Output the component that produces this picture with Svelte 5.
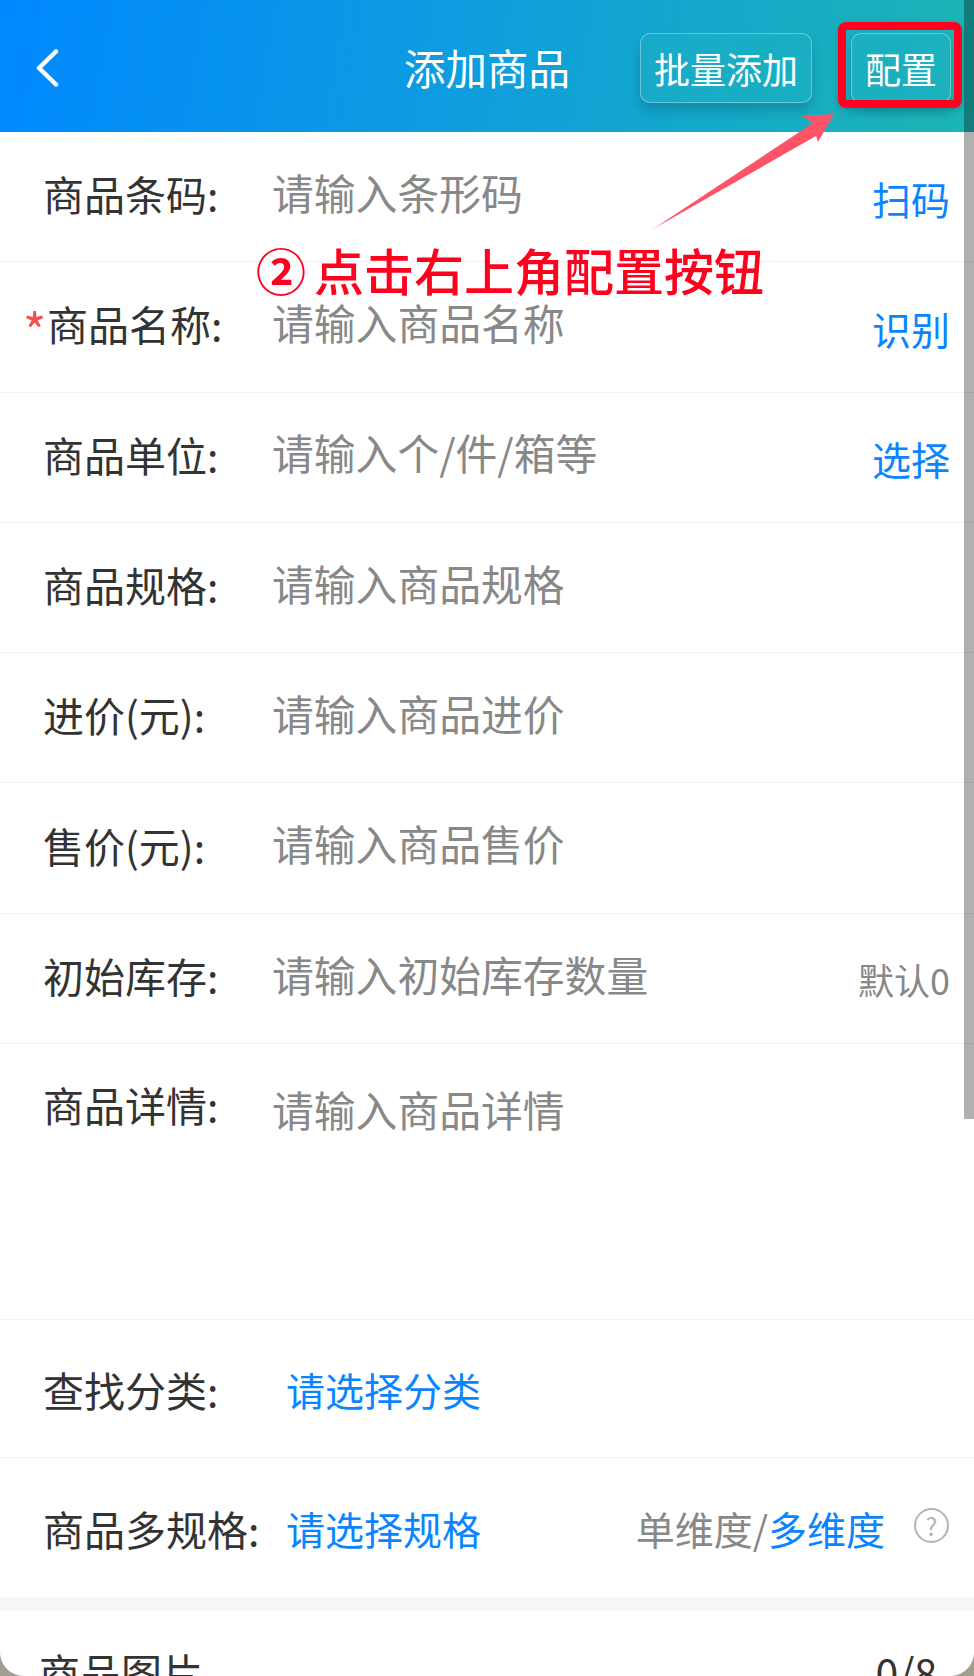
<script>
  const rows = [
    { label: "商品条码:", hint: "请输入条形码", action: "扫码" },
    { label: "商品名称:", hint: "请输入商品名称", action: "识别", required: true },
    { label: "商品单位:", hint: "请输入个/件/箱等", action: "选择" },
    { label: "商品规格:", hint: "请输入商品规格" },
    { label: "进价(元):", hint: "请输入商品进价" },
    { label: "售价(元):", hint: "请输入商品售价" },
    { label: "初始库存:", hint: "请输入初始库存数量", note: "默认0" }
  ];
</script>

<div class="page">
  <header class="topbar">
    <div class="back">
      <svg width="24" height="38" viewBox="0 0 24 38" fill="none">
        <path d="M21 2.5 L4 19 L21 35.5" stroke="#fff" stroke-width="4.5" stroke-linecap="round" stroke-linejoin="round" />
      </svg>
    </div>
    <h1>添加商品</h1>
    <div class="actions">
      <button>批量添加</button>
      <button class="config">配置</button>
    </div>
  </header>

  <main>
    {#each rows as row}
      <div class="row" class:required={row.required}>
        <span class="label">{#if row.required}<i>*</i>{/if}{row.label}</span>
        <span class="hint">{row.hint}</span>
        {#if row.action}<span class="action">{row.action}</span>{/if}
        {#if row.note}<span class="note">{row.note}</span>{/if}
      </div>
    {/each}

    <div class="row detail">
      <span class="label">商品详情:</span>
      <span class="hint">请输入商品详情</span>
    </div>

    <div class="row pick">
      <span class="label">查找分类:</span>
      <span class="link">请选择分类</span>
    </div>

    <div class="row pick spec">
      <span class="label">商品多规格:</span>
      <span class="link">请选择规格</span>
      <span class="dims">单维度/<b>多维度</b></span>
      <span class="help">?</span>
    </div>

    <div class="band"></div>

    <div class="images">
      <span>商品图片</span>
      <span class="count">0/8</span>
    </div>
  </main>

  <!-- annotation drawn over the screenshot -->
  <div class="redbox"></div>
  <svg class="arrow" width="190" height="125" viewBox="0 0 190 125">
    <polygon points="3,115 163,9 152,2 184,0 168,28 166,22" fill="#ff5468" />
  </svg>
  <div class="callout"><span class="num">②</span>点击右上角配置按钮</div>

  <div class="scrollbar"></div>
  <div class="corner left"></div>
  <div class="corner right"></div>
</div>

<style>
  :global(body) {
    background: #fff;
  }
  .page {
    position: relative;
    width: 974px;
    height: 1676px;
    overflow: hidden;
    background: #fff;
    font-family: "Noto Sans CJK SC", "Noto Sans", sans-serif;
  }
  .topbar {
    display: grid;
    grid-template-columns: 1fr auto 1fr;
    align-items: center;
    height: 132px;
    padding: 4px 23px 0 23px;
    box-sizing: border-box;
    background: linear-gradient(100deg, #0088ff 0%, #0d9ce0 45%, #1cb6b4 100%);
    color: #fff;
  }
  .back {
    display: flex;
    padding-left: 12px;
  }
  h1 {
    margin: 0;
    font-size: 41.5px;
    font-weight: 400;
    line-height: 1;
  }
  .actions {
    display: flex;
    justify-content: flex-end;
    gap: 39px;
  }
  button {
    height: 70px;
    padding: 0 13px;
    border: 1px solid rgba(255, 255, 255, 0.35);
    border-radius: 10px;
    background: rgba(30, 175, 195, 0.55);
    box-shadow: 0 8px 12px rgba(0, 40, 60, 0.22);
    color: #fff;
    font-family: inherit;
    font-size: 36px;
    line-height: 1;
  }
  .config {
    width: 100px;
    padding: 0;
  }
  .row {
    position: relative;
    display: flex;
    align-items: center;
    height: 130.3px;
    padding-left: 43px;
    padding-right: 24px;
    box-sizing: border-box;
    border-bottom: 1px solid #f1f1f1;
  }
  .label {
    width: 229px;
    flex: none;
    box-sizing: border-box;
    padding-bottom: 6px;
    color: #333;
    font-size: 41px;
    line-height: 1;
  }
  .label i {
    display: inline-block;
    width: 24px;
    margin-left: -26px;
    vertical-align: -10px;
    color: #f0524f;
    font-size: 50px;
    font-style: normal;
    line-height: 0;
  }
  .required .label {
    padding-left: 6px;
  }
  .hint {
    color: #888;
    font-size: 41.8px;
    line-height: 1;
    padding-bottom: 8px;
  }
  .action {
    margin-left: auto;
    margin-top: 3px;
    color: #0a84ff;
    font-size: 39px;
    line-height: 1;
  }
  .note {
    margin-left: auto;
    margin-top: 2px;
    color: #888;
    font-size: 36px;
    line-height: 1;
  }
  .detail {
    align-items: flex-start;
    height: 276px;
    padding-top: 40px;
  }
  .detail .hint {
    margin-top: 5px;
  }
  .pick {
    height: 138px;
    padding-top: 8px;
  }
  .pick .label {
    width: 243px;
  }
  .spec {
    height: 139px;
    padding-top: 8px;
    border-bottom: 0;
  }
  .link {
    padding-bottom: 6px;
    color: #0a84ff;
    font-size: 39px;
    line-height: 1;
  }
  .dims {
    margin-left: auto;
    padding-bottom: 6px;
    color: #888;
    font-size: 39px;
    line-height: 1;
  }
  .dims b {
    color: #0a84ff;
    font-weight: 400;
  }
  .help {
    display: flex;
    align-items: center;
    justify-content: center;
    width: 35px;
    height: 35px;
    margin-left: 29px;
    margin-right: 1px;
    margin-top: -12px;
    box-sizing: border-box;
    border: 2.5px solid #b4b4b4;
    border-radius: 50%;
    color: #b4b4b4;
    font-size: 25px;
    line-height: 1;
  }
  .band {
    height: 14px;
    background: #f7f7f7;
  }
  .images {
    display: flex;
    justify-content: space-between;
    padding: 40px 37px 0 39px;
    color: #333;
    font-size: 41px;
    line-height: 1;
  }
  .redbox {
    position: absolute;
    left: 838px;
    top: 22px;
    width: 124px;
    height: 86px;
    box-sizing: border-box;
    border: 8px solid #ff001f;
    border-radius: 8px;
    box-shadow: 0 3px 8px rgba(0, 40, 60, 0.2);
  }
  .arrow {
    position: absolute;
    left: 650px;
    top: 114px;
  }
  .callout {
    position: absolute;
    left: 256px;
    top: 237px;
    color: #ff001f;
    font-size: 50px;
    font-weight: 500;
    line-height: 64px;
    white-space: nowrap;
  }
  .num {
    display: inline-block;
    width: 58px;
    font-weight: 700;
  }
  .scrollbar {
    position: absolute;
    left: 964px;
    top: 0;
    width: 10px;
    height: 1119px;
    background: rgba(0, 0, 0, 0.31);
  }
  .corner {
    position: absolute;
    bottom: 0;
    width: 24px;
    height: 24px;
  }
  .corner.left {
    left: 0;
    background: radial-gradient(circle at 100% 0, transparent 23.5px, #a39d8f 24.5px);
  }
  .corner.right {
    right: 0;
    background: radial-gradient(circle at 0 0, transparent 23.5px, #a39d8f 24.5px);
  }
</style>
